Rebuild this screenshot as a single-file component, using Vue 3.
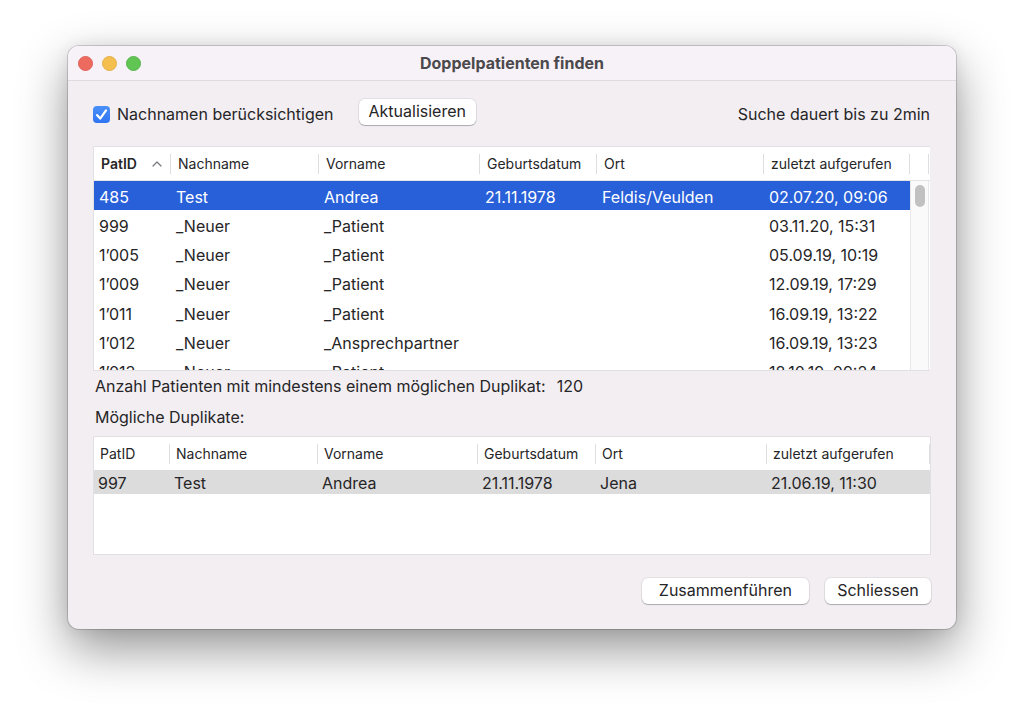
<script setup>
import { ref } from 'vue'

const considerSurname = ref(true)
const columns = ['PatID', 'Nachname', 'Vorname', 'Geburtsdatum', 'Ort', 'zuletzt aufgerufen']

const patients = [
  ['485', 'Test', 'Andrea', '21.11.1978', 'Feldis/Veulden', '02.07.20, 09:06'],
  ['999', '_Neuer', '_Patient', '', '', '03.11.20, 15:31'],
  ['1’005', '_Neuer', '_Patient', '', '', '05.09.19, 10:19'],
  ['1’009', '_Neuer', '_Patient', '', '', '12.09.19, 17:29'],
  ['1’011', '_Neuer', '_Patient', '', '', '16.09.19, 13:22'],
  ['1’012', '_Neuer', '_Ansprechpartner', '', '', '16.09.19, 13:23'],
  ['1’013', '_Neuer', '_Patient', '', '', '18.10.19, 09:24']
]
const selected = ref('485')

const duplicates = [['997', 'Test', 'Andrea', '21.11.1978', 'Jena', '21.06.19, 11:30']]
</script>

<template>
  <div class="desktop">
    <main class="window">
      <header class="titlebar">
        <div class="lights">
          <button class="light close" type="button" aria-label="Schliessen"></button>
          <button class="light minimize" type="button" aria-label="Minimieren"></button>
          <button class="light zoom" type="button" aria-label="Zoomen"></button>
        </div>
        <h1 class="title">Doppelpatienten finden</h1>
      </header>

      <div class="content">
        <div class="toolbar">
          <label class="check">
            <span class="box">
              <input v-model="considerSurname" type="checkbox" />
              <svg v-if="considerSurname" class="tick" viewBox="0 0 17 17" aria-hidden="true">
                <path d="M4 9.1 L7.2 12.6 L13 4.4" />
              </svg>
            </span>
            <span>Nachnamen berücksichtigen</span>
          </label>
          <button class="btn" type="button">Aktualisieren</button>
          <span class="hint">Suche dauert bis zu 2min</span>
        </div>

        <section class="panel patients">
          <table>
            <colgroup>
              <col class="a1" /><col class="a2" /><col class="a3" /><col class="a4" /><col class="a5" /><col class="a6" />
            </colgroup>
            <thead>
              <tr>
                <th v-for="(c, i) in columns" :key="c" scope="col" :class="{ sorted: i === 0 }">
                  <span class="head">
                    {{ c }}
                    <svg v-if="i === 0" class="caret" viewBox="0 0 10 6" aria-hidden="true">
                      <path d="M1 5 L5 1 L9 5" />
                    </svg>
                  </span>
                </th>
              </tr>
            </thead>
            <tbody>
              <tr v-for="p in patients" :key="p[0]" :class="{ selected: p[0] === selected }" @click="selected = p[0]">
                <td v-for="(v, i) in p" :key="i">{{ v }}</td>
              </tr>
            </tbody>
          </table>
          <div class="side">
            <div class="side-head"></div>
            <div class="track"><div class="thumb"></div></div>
          </div>
        </section>

        <p class="count"><span>Anzahl Patienten mit mindestens einem möglichen Duplikat:</span><span>120</span></p>
        <h2 class="subtitle">Mögliche Duplikate:</h2>

        <section class="panel duplicates">
          <table>
            <colgroup>
              <col class="b1" /><col class="b2" /><col class="b3" /><col class="b4" /><col class="b5" /><col class="b6" />
            </colgroup>
            <thead>
              <tr>
                <th v-for="c in columns" :key="c" scope="col">{{ c }}</th>
              </tr>
            </thead>
            <tbody>
              <tr v-for="d in duplicates" :key="d[0]">
                <td v-for="(v, i) in d" :key="i">{{ v }}</td>
              </tr>
            </tbody>
          </table>
        </section>

        <footer class="actions">
          <button class="btn wide" type="button">Zusammenführen</button>
          <button class="btn" type="button">Schliessen</button>
        </footer>
      </div>
    </main>
  </div>
</template>

<style>
body {
  background: #fff;
}
</style>

<style scoped>
.desktop {
  padding: 46px 68px 90px;
  overflow: hidden;
  font-family: Inter, "Liberation Sans", sans-serif;
  font-size: 16px;
  line-height: 20px;
  color: #262527;
}
.window {
  border-radius: 11px;
  background: #f2eef2;
  box-shadow: 0 0 0 1px rgba(0, 0, 0, 0.16), 0 20px 50px rgba(0, 0, 0, 0.42), 0 0 16px rgba(0, 0, 0, 0.08);
}
.titlebar {
  display: grid;
  grid-template-columns: 1fr auto 1fr;
  align-items: center;
  height: 34px;
  padding: 0 10px;
  border-bottom: 1px solid #dfdadf;
  border-radius: 11px 11px 0 0;
  background: #f7f2f8;
}
.lights {
  display: flex;
  gap: 9px;
}
.light {
  width: 15px;
  height: 15px;
  padding: 0;
  border: 1px solid;
  border-radius: 50%;
}
.close {
  background: #ed6a5f;
  border-color: #e0605a;
}
.minimize {
  background: #f5bf4f;
  border-color: #e3b04a;
}
.zoom {
  background: #61c554;
  border-color: #58b54b;
}
.title {
  margin: 0;
  font-size: 16px;
  font-weight: 700;
  color: #4b494c;
}
.content {
  display: flex;
  flex-direction: column;
  padding: 18px 25px 25px;
}
.toolbar {
  display: flex;
  align-items: center;
  height: 26px;
  margin-bottom: 21px;
}
.check {
  display: flex;
  align-items: center;
  gap: 7px;
  margin-right: 25px;
  padding-top: 4px;
}
.box {
  position: relative;
  display: flex;
}
.box input {
  appearance: none;
  width: 17px;
  height: 17px;
  margin: 0;
  border: 1px solid #c8c4c8;
  border-radius: 4px;
  background: #fff;
}
.box input:checked {
  border: 0;
  background: linear-gradient(#4a90f8, #2f74f3);
}
.tick {
  position: absolute;
  inset: 0;
  pointer-events: none;
}
.tick path {
  fill: none;
  stroke: #fff;
  stroke-width: 2.2;
  stroke-linecap: round;
  stroke-linejoin: round;
}
.hint {
  margin-left: auto;
  padding: 4px 1px 0 0;
}
.btn {
  height: 26px;
  padding: 0 10px 2px;
  border: 0;
  border-radius: 6px;
  background: #fff;
  box-shadow: 0 0 0 1px rgba(0, 0, 0, 0.06), 0 1px 1px rgba(0, 0, 0, 0.24);
  font: inherit;
  color: inherit;
}
.panel {
  display: flex;
  align-items: flex-start;
  overflow: hidden;
  border: 1px solid #e3e0e3;
  background: #fff;
}
table {
  flex: 1;
  width: 100%;
  min-width: 0;
  table-layout: fixed;
  border-collapse: separate;
  border-spacing: 0;
}
th,
td {
  padding: 0;
  text-align: left;
  white-space: nowrap;
}
th {
  font-size: 14px;
  font-weight: 400;
  background: linear-gradient(#dedede, #dedede) no-repeat right center / 1px 20px;
}
.patients {
  height: 223px;
  margin-right: 1px;
  border-right: 0;
}
.patients table {
  height: 239px;
}
.patients th {
  height: 33px;
  padding-left: 7px;
  border-bottom: 1px solid #e4e4e4;
}
.patients td {
  padding: 2px 0 0 5px;
}
.patients .sorted {
  font-weight: 600;
}
.head {
  display: flex;
  align-items: center;
  justify-content: space-between;
  padding-right: 9px;
}
.caret {
  width: 10px;
  height: 6px;
}
.caret path {
  fill: none;
  stroke: #77757a;
  stroke-width: 1.2;
  stroke-linecap: round;
  stroke-linejoin: round;
}
.selected td {
  background: #2860d9;
  color: #fff;
}
.side {
  display: flex;
  flex: 0 0 20px;
  flex-direction: column;
  align-self: stretch;
}
.side-head {
  height: 33px;
  border-bottom: 1px solid #e4e4e4;
  background: linear-gradient(#dedede, #dedede) no-repeat right 1px center / 1px 20px;
}
.track {
  display: flex;
  flex: 1;
  justify-content: center;
  margin-right: 1px;
  padding-top: 4px;
  border: solid #e8e8e8;
  border-width: 0 1px;
  background: #fafafa;
}
.thumb {
  width: 10px;
  height: 22px;
  border-radius: 5px;
  background: #c1c1c1;
}
.count {
  display: flex;
  gap: 11px;
  margin: 5px 2px 11px;
}
.subtitle {
  margin: 0 2px 9px;
  font-size: 16px;
  font-weight: 400;
}
.duplicates {
  height: 117px;
}
.duplicates th {
  height: 33px;
  padding-left: 6px;
}
.duplicates td {
  height: 22px;
  padding: 2px 0 0 4px;
  background: #dcdcdc;
}
.a1 { width: 77px; }
.a2 { width: 148px; }
.a3 { width: 161px; }
.a4 { width: 117px; }
.a5 { width: 167px; }
.a6 { width: 146px; }
.b1 { width: 76px; }
.b2 { width: 148px; }
.b3 { width: 160px; }
.b4 { width: 118px; }
.b5 { width: 171px; }
.b6 { width: 163px; }
.actions {
  display: flex;
  justify-content: flex-end;
  gap: 16px;
  margin-top: 23px;
}
.actions .btn {
  min-width: 106px;
}
.actions .wide {
  padding: 0 17px 2px;
}
</style>
